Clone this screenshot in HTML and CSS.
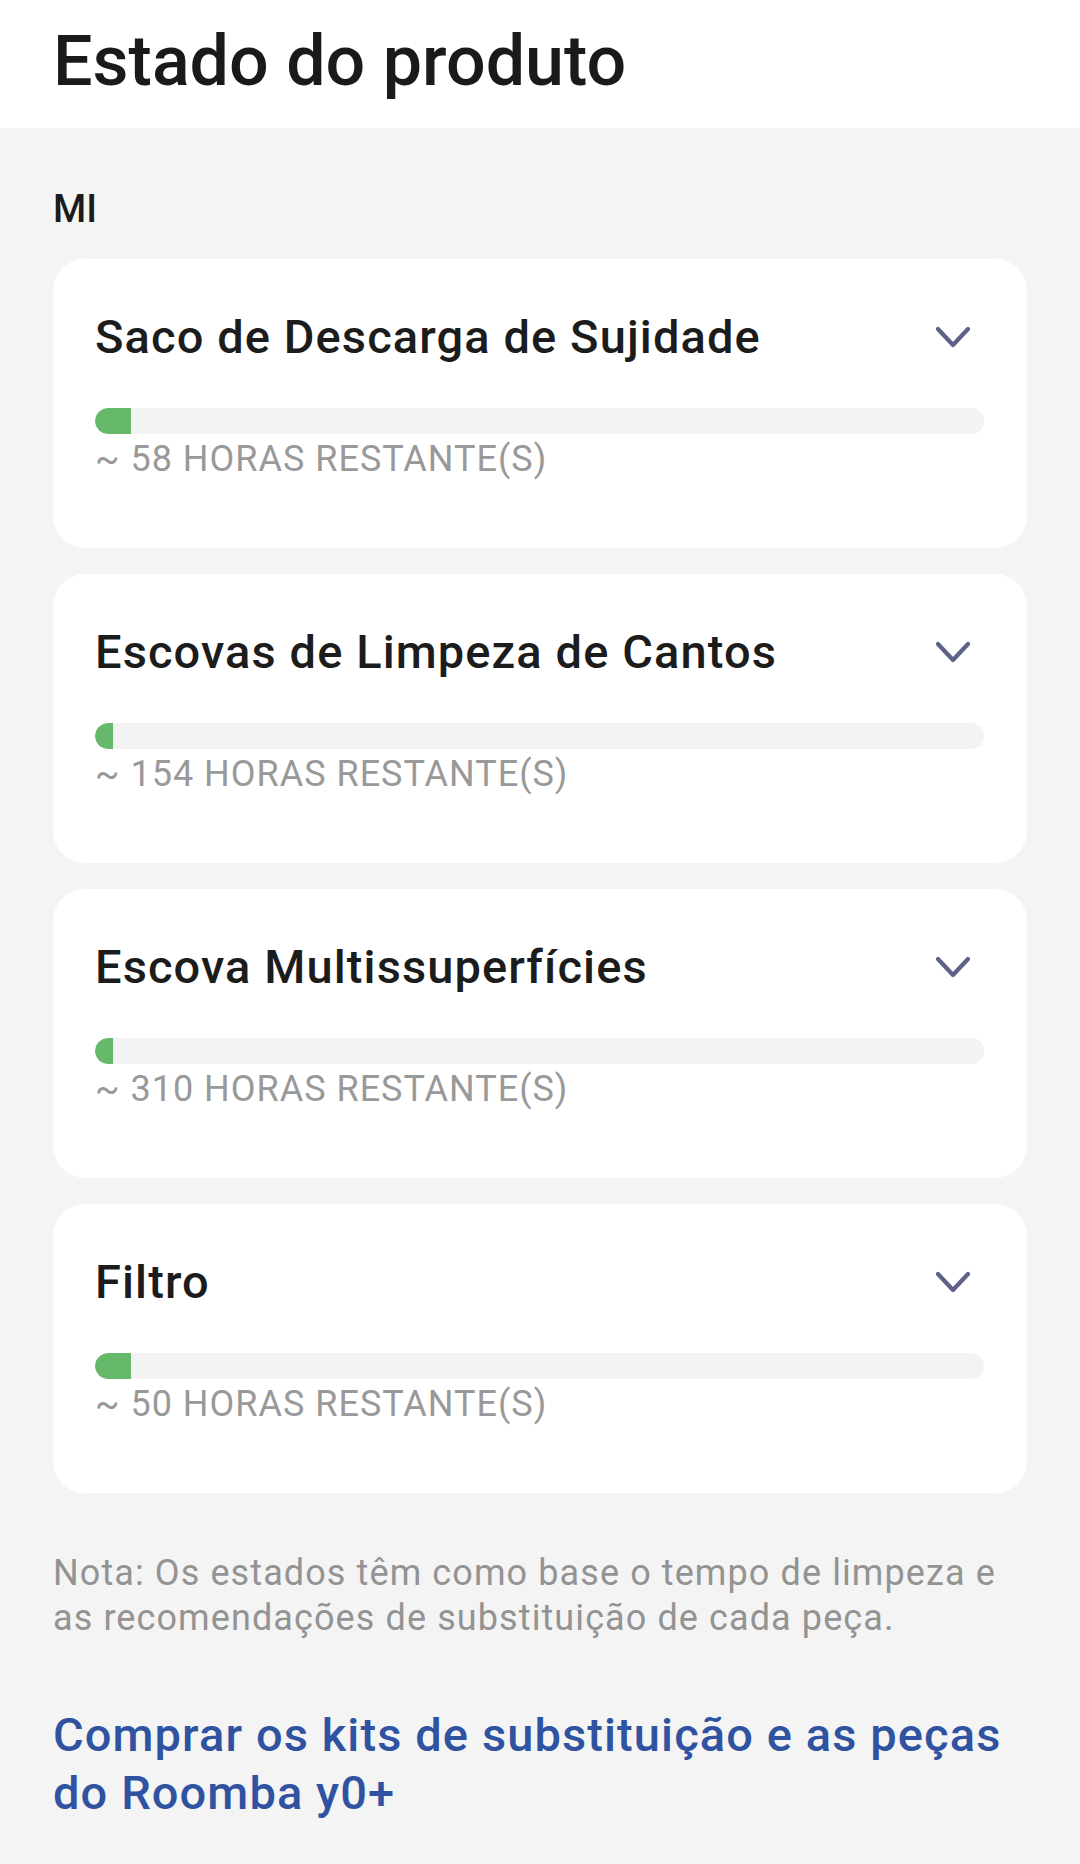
FILE: index.html
```html
<!DOCTYPE html>
<html lang="pt">
<head>
<meta charset="utf-8">
<title>Estado do produto</title>
<link rel="stylesheet" href="styles.css">
</head>
<body>
<header class="top-bar">
  <h1 class="page-title">Estado do produto</h1>
</header>
<main class="content">
  <h2 class="section-label">MI</h2>
  <ul class="parts">
    <li class="part-card">
      <div class="part-head">
        <span class="part-name">Saco de Descarga de Sujidade</span>
        <svg class="chevron" width="34" height="22" viewBox="0 0 34 22"><path d="M2 3 L17 19 L32 3" fill="none" stroke="#5c6288" stroke-width="4.2" stroke-linecap="round" stroke-linejoin="round"/></svg>
      </div>
      <div class="track"><div class="fill" style="width:36px"></div></div>
      <p class="remaining">~ 58 HORAS RESTANTE(S)</p>
    </li>
    <li class="part-card">
      <div class="part-head">
        <span class="part-name">Escovas de Limpeza de Cantos</span>
        <svg class="chevron" width="34" height="22" viewBox="0 0 34 22"><path d="M2 3 L17 19 L32 3" fill="none" stroke="#5c6288" stroke-width="4.2" stroke-linecap="round" stroke-linejoin="round"/></svg>
      </div>
      <div class="track"><div class="fill" style="width:18px"></div></div>
      <p class="remaining">~ 154 HORAS RESTANTE(S)</p>
    </li>
    <li class="part-card">
      <div class="part-head">
        <span class="part-name">Escova Multissuperfícies</span>
        <svg class="chevron" width="34" height="22" viewBox="0 0 34 22"><path d="M2 3 L17 19 L32 3" fill="none" stroke="#5c6288" stroke-width="4.2" stroke-linecap="round" stroke-linejoin="round"/></svg>
      </div>
      <div class="track"><div class="fill" style="width:18px"></div></div>
      <p class="remaining">~ 310 HORAS RESTANTE(S)</p>
    </li>
    <li class="part-card">
      <div class="part-head">
        <span class="part-name">Filtro</span>
        <svg class="chevron" width="34" height="22" viewBox="0 0 34 22"><path d="M2 3 L17 19 L32 3" fill="none" stroke="#5c6288" stroke-width="4.2" stroke-linecap="round" stroke-linejoin="round"/></svg>
      </div>
      <div class="track"><div class="fill" style="width:36px"></div></div>
      <p class="remaining">~ 50 HORAS RESTANTE(S)</p>
    </li>
  </ul>
  <p class="note">Nota: Os estados têm como base o tempo de limpeza e as recomendações de substituição de cada peça.</p>
  <a class="shop-link" href="#">Comprar os kits de substituição e as peças do Roomba y0+</a>
</main>
</body>
</html>
```
FILE: styles.css
```css
* { box-sizing: border-box; }

html, body {
  margin: 0;
  padding: 0;
  background: #f4f4f4;
  font-family: Roboto, "Noto Sans", "Liberation Sans", sans-serif;
  color: #1b1b1b;
}

body {
  width: 1080px;
  min-height: 1864px;
}

.top-bar {
  background: #ffffff;
  height: 128px;
  padding: 20px 53px 0 53px;
}

.page-title {
  margin: 0;
  font-size: 70px;
  line-height: 82px;
  font-weight: 500;
  color: #1a1a1a;
}

.content {
  padding: 59px 53px 0 53px;
}

.section-label {
  margin: 0;
  font-size: 38px;
  line-height: 45px;
  font-weight: 500;
  color: #1b1b1b;
}

.parts {
  list-style: none;
  margin: 27px 0 0 0;
  padding: 0;
  display: flex;
  flex-direction: column;
  gap: 26px;
}

.part-card {
  background: #ffffff;
  border-radius: 32px;
  padding: 50px 43px 69px 42px;
}

.part-head {
  display: flex;
  align-items: center;
  justify-content: space-between;
  height: 56px;
}

.part-name {
  font-size: 47px;
  line-height: 56px;
  font-weight: 500;
  letter-spacing: 1.1px;
  color: #1c1c1c;
}

.chevron {
  margin-right: 14px;
  flex: none;
}

.track {
  margin-top: 43px;
  height: 26px;
  border-radius: 13px;
  background: #f3f3f3;
  overflow: hidden;
}

.fill {
  height: 100%;
  background: #66b96a;
  border-radius: 13px 0 0 13px;
}

.remaining {
  margin: 5px 0 0 0;
  font-size: 36px;
  line-height: 40px;
  letter-spacing: 1px;
  color: #999999;
}

.note {
  margin: 58px 0 0 0;
  font-size: 36px;
  line-height: 45px;
  letter-spacing: 1.1px;
  color: #939393;
}

.shop-link {
  display: block;
  margin-top: 65px;
  font-size: 47px;
  line-height: 58px;
  font-weight: 500;
  letter-spacing: 1.1px;
  color: #2f53a0;
  text-decoration: none;
}
```
